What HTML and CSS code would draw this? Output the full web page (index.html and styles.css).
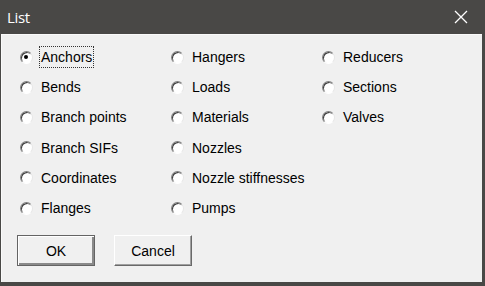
FILE: index.html
```html
<!DOCTYPE html>
<html lang="en">
<head>
    <meta charset="UTF-8">
    <title>List</title>
    <link rel="stylesheet" href="styles.css">
</head>
<body>
    <div class="window">
        <div class="titlebar">
            <span class="title">List</span>
            <svg class="close" width="14" height="14" viewBox="0 0 14 14">
                <path d="M1 1 L13 13 M13 1 L1 13" stroke="#fff" stroke-width="1.3" fill="none"/>
            </svg>
        </div>

        <div class="client">
            <div class="options">
                <label class="opt checked"><span class="radio"></span><span class="text focus">Anchors</span></label>
                <label class="opt"><span class="radio"></span><span class="text">Hangers</span></label>
                <label class="opt"><span class="radio"></span><span class="text">Reducers</span></label>

                <label class="opt"><span class="radio"></span><span class="text">Bends</span></label>
                <label class="opt"><span class="radio"></span><span class="text">Loads</span></label>
                <label class="opt"><span class="radio"></span><span class="text">Sections</span></label>

                <label class="opt"><span class="radio"></span><span class="text">Branch points</span></label>
                <label class="opt"><span class="radio"></span><span class="text">Materials</span></label>
                <label class="opt"><span class="radio"></span><span class="text">Valves</span></label>

                <label class="opt"><span class="radio"></span><span class="text">Branch SIFs</span></label>
                <label class="opt"><span class="radio"></span><span class="text">Nozzles</span></label>
                <span></span>

                <label class="opt"><span class="radio"></span><span class="text">Coordinates</span></label>
                <label class="opt"><span class="radio"></span><span class="text">Nozzle stiffnesses</span></label>
                <span></span>

                <label class="opt"><span class="radio"></span><span class="text">Flanges</span></label>
                <label class="opt"><span class="radio"></span><span class="text">Pumps</span></label>
                <span></span>
            </div>

            <div class="buttons">
                <button class="btn default">OK</button>
                <button class="btn">Cancel</button>
            </div>
        </div>
    </div>
</body>
</html>
```

FILE: styles.css
```css
body {
    margin: 0;
    background: #494846;
    font-family: "Liberation Sans", Arial, sans-serif;
}
.window {
    width: 485px;
    height: 286px;
    background: #494846;
    padding: 0 3px 4px 1px;
    box-sizing: border-box;
    display: flex;
    flex-direction: column;
}
.titlebar {
    height: 33px;
    display: flex;
    align-items: center;
    justify-content: space-between;
    padding: 0 14px 1px 6px;
    flex-shrink: 0;
}
.title {
    color: #fff;
    font-family: "Open Sans", "Noto Sans", sans-serif;
    font-size: 15px;
    letter-spacing: -0.3px;
}
.close {
    display: block;
}
.client {
    flex: 1;
    background: #f0f0f0;
    border-top: 1px solid #fafafa;
    border-left: 1px solid #fafafa;
    padding: 7px 0 0 18px;
}
.options {
    display: grid;
    grid-template-columns: 151px 151px 151px;
    grid-auto-rows: 30.2px;
}
.opt {
    display: flex;
    align-items: center;
    font-size: 14px;
    color: #000;
}
.radio {
    width: 13px;
    height: 13px;
    border-radius: 50%;
    box-sizing: border-box;
    background: #fff;
    border: 1px solid;
    border-color: #808080 #e6e6e6 #ffffff #808080;
    box-shadow: inset 1px 1px 0 #3c3c3c;
    margin-right: 6px;
    position: relative;
    flex-shrink: 0;
}
.checked .radio::after {
    content: "";
    position: absolute;
    left: 3px;
    top: 3px;
    width: 4px;
    height: 4px;
    border-radius: 50%;
    background: #000;
}
.text {
    padding: 2px 1px;
    border: 1px solid transparent;
}
.text.focus {
    border: 1px dotted #333;
}
.buttons {
    display: flex;
    gap: 19px;
    margin-top: 12px;
    margin-left: -3px;
}
.btn {
    width: 78px;
    height: 31px;
    background: #f0f0f0;
    font-family: "Liberation Sans", Arial, sans-serif;
    font-size: 14px;
    color: #000;
    border: 1px solid;
    border-color: #ffffff #696969 #696969 #ffffff;
    box-shadow: inset -1px -1px 0 #a0a0a0;
    padding: 0;
}
.btn.default {
    border: 1px solid #646464;
    box-shadow: inset 1px 1px 0 #fff, inset -2px -2px 0 #8a8a8a;
}
```
